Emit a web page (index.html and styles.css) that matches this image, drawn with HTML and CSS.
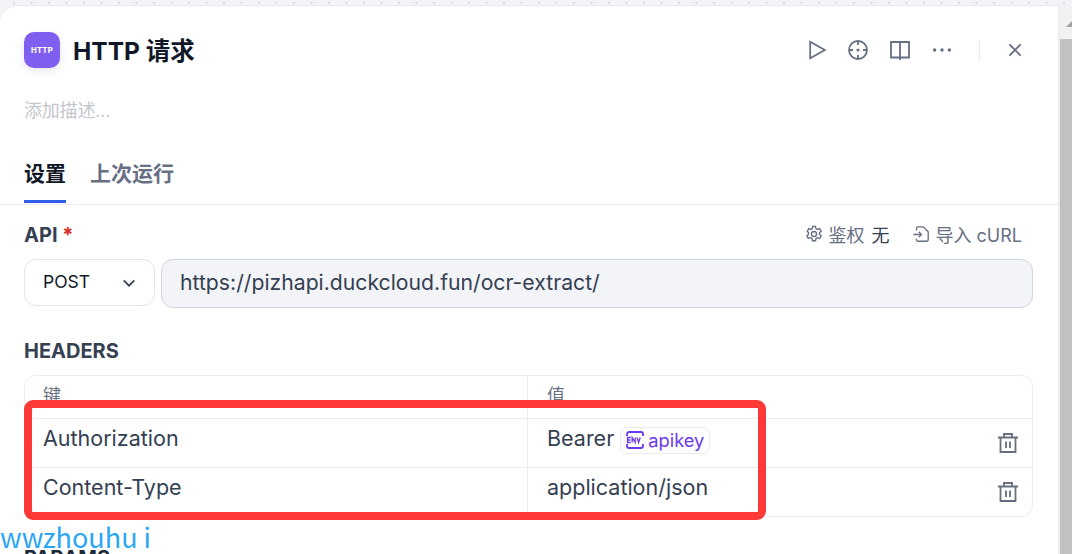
FILE: index.html
```html
<!DOCTYPE html>
<html lang="zh">
<head>
<meta charset="utf-8">
<title>HTTP 请求</title>
<link rel="stylesheet" href="styles.css">
</head>
<body>
<div class="app">
  <main class="panel">
    <header class="head">
      <div class="logo">HTTP</div>
      <h1 class="title">HTTP 请求</h1>
      <div class="actions">
        <svg class="ico" viewBox="0 0 20 20"><path d="M3.200 1.800 17.800 10 3.200 18.200Z"/></svg>
        <svg class="ico" viewBox="0 0 20 20"><circle cx="10" cy="10" r="9"/><path d="M10 1v4M10 15v4M1 10h4M15 10h4"/><circle class="fill" cx="10" cy="10" r="1.600"/></svg>
        <svg class="ico" viewBox="0 0 20 20"><path d="M1 2h18v15.500H1ZM10 2v18"/></svg>
        <svg class="ico" viewBox="0 0 20 20"><circle class="fill" cx="2.600" cy="10" r="1.700"/><circle class="fill" cx="10" cy="10" r="1.700"/><circle class="fill" cx="17.400" cy="10" r="1.700"/></svg>
        <span class="divider"></span>
        <svg class="ico close" viewBox="0 0 20 20"><path d="M3 3l14 14M17 3 3 17"/></svg>
      </div>
    </header>
    <p class="desc">添加描述...</p>
    <nav class="tabs">
      <span class="tab active">设置</span>
      <span class="tab">上次运行</span>
    </nav>
    <section class="body">
      <div class="api-head">
        <span class="label">API <em>*</em></span>
        <div class="api-tools">
          <span class="tool"><svg class="tool-ico" viewBox="0 0 20 20"><path d="M8.300 1.500h3.400l.5 2.500 1.700.9 2.400-.9 1.700 3-1.900 1.700v1.600l1.900 1.700-1.700 3-2.400-.9-1.700.9-.5 2.500H8.300l-.5-2.500-1.700-.9-2.400.9-1.700-3 1.900-1.700V8.700L2.500 7l1.700-3 2.400.9 1.700-.9Z"/><circle cx="10" cy="10" r="2.800"/></svg><span>鉴权 <b>无</b></span></span>
          <span class="tool"><svg class="tool-ico" viewBox="0 0 20 20"><path d="M5 6V3.500A1.500 1.500 0 0 1 6.500 2h6L18 7.500v9a1.500 1.500 0 0 1-1.500 1.500h-10A1.500 1.500 0 0 1 5 16.500V15M1.500 10.500H10M7.500 7.500l3 3-3 3"/></svg><span>导入 cURL</span></span>
        </div>
      </div>
      <div class="api-row">
        <div class="method"><span>POST</span><svg class="chev" viewBox="0 0 12 12"><path d="M2 4l4 4 4-4"/></svg></div>
        <div class="url">https://pizhapi.duckcloud.fun/ocr-extract/</div>
      </div>
      <h2 class="label section">HEADERS</h2>
      <div class="table">
        <div class="row head-row"><div class="cell key">键</div><div class="cell val">值</div></div>
        <div class="row">
          <div class="cell key">Authorization</div>
          <div class="cell val">
            <span>Bearer</span>
            <span class="chip">
              <svg class="env" viewBox="0 0 18 18"><path d="M1 5V3a2 2 0 0 1 2-2h12a2 2 0 0 1 2 2v2M1 13v2a2 2 0 0 0 2 2h12a2 2 0 0 0 2-2v-2"/><path class="thin" d="M4.800 6.500H1.500v5h3.300M1.500 9h3M6.200 11.500v-5l3 5v-5M11 6.500l1.600 5 1.600-5"/></svg>
              apikey
            </span>
            <svg class="trash" viewBox="0 0 20 20"><path d="M0 4.500h20M2.500 4.500V19h15V4.500M6 4.500V1h8v3.500M8 8.500V15M12 8.500V15"/></svg>
          </div>
        </div>
        <div class="row">
          <div class="cell key">Content-Type</div>
          <div class="cell val">
            <span>application/json</span>
            <svg class="trash" viewBox="0 0 20 20"><path d="M0 4.500h20M2.500 4.500V19h15V4.500M6 4.500V1h8v3.500M8 8.500V15M12 8.500V15"/></svg>
          </div>
        </div>
      </div>
      <h2 class="label section params">PARAMS</h2>
    </section>
  </main>
  <aside class="scrollbar">
    <div class="arrow"></div>
    <div class="thumb"></div>
  </aside>
  <div class="redbox"></div>
  <div class="mark">wwzhouhu i</div>
</div>
</body>
</html>
```
FILE: styles.css
```css
* { box-sizing: border-box; }
html, body { margin: 0; height: 100%; overflow: hidden; }
body { font-family: Inter, "Noto Sans CJK SC", "Liberation Sans", sans-serif; background: #f2f4f7; }
.app { position: relative; display: flex; width: 1072px; height: 554px; overflow: hidden; background-image: radial-gradient(circle, #d5d9e2 1px, transparent 1.200px); background-size: 17.500px 17.500px; background-position: 5.250px -5.750px; }
.panel { width: 1058px; height: 700px; margin-top: 5px; background: #fff; border-top: 1px solid #e9ebf0; border-top-left-radius: 18px; flex: none; }
.head { display: flex; align-items: center; padding: 26px 24px 0; height: 62px; }
.logo { width: 36px; height: 36px; border-radius: 10px; background: #7f5ef0; color: #fff; font-size: 7.500px; font-weight: 800; letter-spacing: .3px; display: flex; align-items: center; justify-content: center; box-shadow: 0 3px 8px rgba(60, 50, 120, .12); }
.title { margin: 2px 0 0 13px; font-size: 24.500px; font-weight: 700; color: #101828; line-height: 36px; }
.actions { margin-left: auto; display: flex; align-items: center; }
.ico { width: 20px; height: 20px; fill: none; stroke: #676f83; stroke-width: 1.800; margin-left: 22px; }
.ico:nth-child(2) { margin-left: 21px; }
.ico .fill { fill: #676f83; stroke: none; }
.divider { width: 1px; height: 21px; background: #e9ebf0; margin: 0 0 0 27px; }
.ico.close { width: 16px; height: 16px; margin-left: 27px; margin-right: 11px; stroke-width: 2.400; }
.desc { margin: 31px 0 0; padding: 0 24px; font-size: 18px; line-height: 24px; color: #c3c6cc; letter-spacing: -.2px; }
.tabs { display: flex; gap: 24px; padding: 0 24px; margin-top: 37px; height: 45px; border-bottom: 1.500px solid #ececf0; }
.tab { font-size: 21px; font-weight: 700; line-height: 27px; color: #676f83; height: 43px; }
.tab.active { color: #101828; border-bottom: 3px solid #2f5fe8; }
.body { padding: 0 25px 0 24px; }
.api-head { display: flex; align-items: center; justify-content: space-between; margin-top: 17px; height: 26px; }
.label { font-size: 20px; font-weight: 700; color: #354052; margin: 0; line-height: 26px; }
.label em { font-style: normal; color: #d92d20; }
.api-tools { display: flex; gap: 23px; padding-right: 11px; padding-bottom: 2px; }
.tool { display: flex; align-items: center; gap: 5px; font-size: 18px; color: #676f83; }
.tool b { font-weight: 400; color: #354052; margin-left: 2px; }
.tool-ico { width: 18px; height: 18px; fill: none; stroke: #676f83; stroke-width: 1.500; }
.api-row { display: flex; gap: 6px; margin-top: 11px; align-items: flex-start; }
.method { width: 131px; height: 47px; border: 1px solid #e3e5e9; border-radius: 12px; display: flex; align-items: center; justify-content: space-between; padding: 0 17px 2px 18px; font-size: 17.500px; color: #101828; }
.chev { width: 16px; height: 16px; margin-top: 2px; fill: none; stroke: #354052; stroke-width: 1.300; }
.url { flex: 1; height: 49px; border: 1px solid #d0d5dc; border-radius: 12px; background: #f2f4f7; padding: 0 18px 3px; display: flex; align-items: center; font-size: 21.200px; color: #354052; }
.section { margin-top: 30px; }
.table { margin-top: 11px; border: 1px solid #ececf0; border-radius: 12px; width: 1009px; }
.row { display: flex; height: 49px; border-top: 1px solid #ececf0; }
.head-row { height: 42px; border-top: 0; }
.cell { padding: 4px 18px 0; display: flex; align-items: flex-start; line-height: 30px; font-size: 21.500px; color: #354052; flex: 1; min-width: 0; }
.head-row .cell { font-size: 18px; line-height: 24px; color: #676f83; padding-top: 8px; }
.key { width: 503px; flex: none; border-right: 1px solid #ececf0; }
.val { gap: 6px; padding-left: 19px; padding-right: 14px; }
.chip { display: inline-flex; align-items: center; gap: 4px; height: 27px; margin-top: 4px; padding: 0 5px 1px; border: 1px solid #ececf0; border-radius: 7px; font-size: 18.300px; line-height: 24px; color: #6938ef; }
.env { width: 18px; height: 18px; fill: none; stroke: #6938ef; stroke-width: 1.800; }
.env .thin { stroke-width: 1.300; }
.trash { width: 20px; height: 20px; margin-left: auto; margin-top: 10px; fill: none; stroke: #676f83; stroke-width: 1.800; }
.section.params { margin-top: 28px; color: #1d2939; }
.scrollbar { flex: 1; margin-top: 5px; background: #f1f1f1; border-left: 1px solid #e9e9e9; display: flex; flex-direction: column; padding: 15px 0 0 1px; }
.arrow { width: 0; height: 0; margin: 0 0 12px 6px; border-left: 7px solid transparent; border-bottom: 7px solid #a3a3a3; }
.thumb { flex: 1; background: #c1c1c1; }
.redbox { position: absolute; left: 24px; top: 400px; width: 742px; height: 120px; border: 8px solid #ff3838; border-radius: 9px; }
.mark { position: absolute; left: 0; top: 518px; font-family: "Noto Sans CJK SC", "Open Sans", sans-serif; font-size: 27px; line-height: 38px; color: #2ba6f5; white-space: nowrap; }
```
